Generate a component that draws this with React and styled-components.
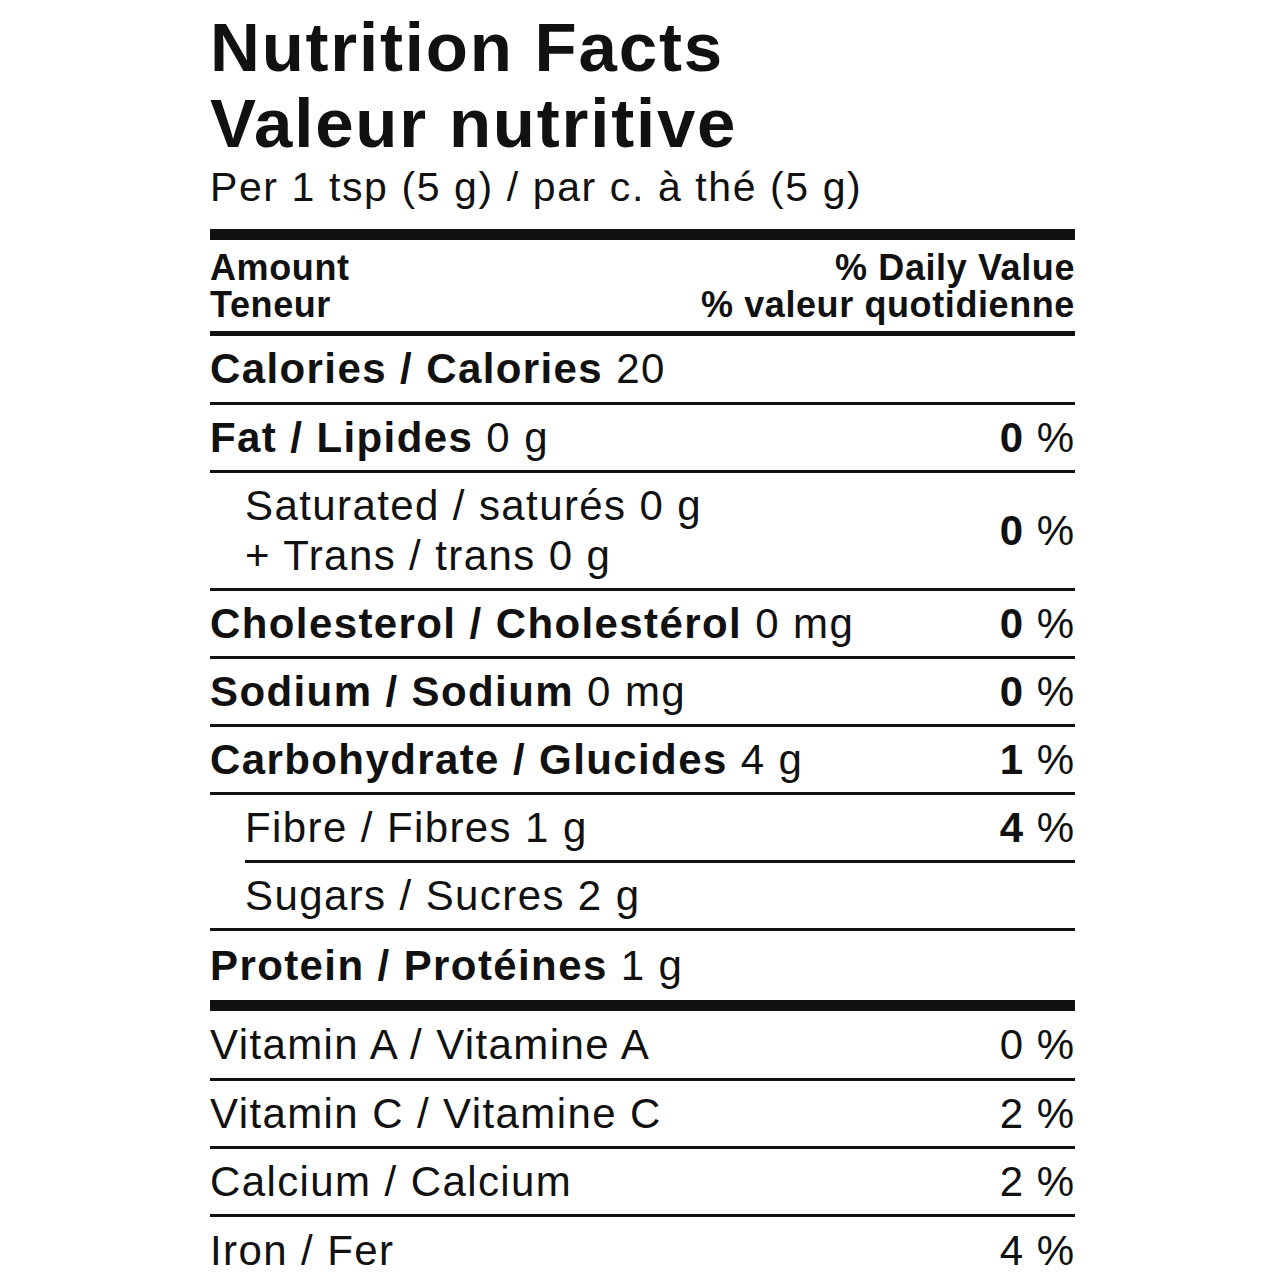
import React from 'react';
import styled, { createGlobalStyle } from 'styled-components';

const GlobalStyle = createGlobalStyle`
  html, body {
    margin: 0;
    padding: 0;
    background: #ffffff;
  }
  body {
    font-family: "Liberation Sans", Arial, sans-serif;
    color: #111111;
  }
`;

const Label = styled.div`
  width: 865px;
  margin-left: 210px;
  padding-top: 10px;
`;

const Title = styled.h1`
  margin: 0;
  font-size: 69px;
  line-height: 76px;
  font-weight: 700;
  letter-spacing: 1.8px;
`;

const Serving = styled.div`
  font-size: 41px;
  line-height: 50px;
  letter-spacing: 1.6px;
  padding-bottom: 17px;
`;

const Bar = styled.div`
  height: ${(p) => p.$weight}px;
  background: #111111;
`;

const Header = styled.div`
  display: flex;
  justify-content: space-between;
  height: 91px;
  box-sizing: border-box;
  padding-top: 9px;
  font-size: 36px;
  line-height: 37px;
  font-weight: 700;
  letter-spacing: 0.6px;
`;

const HeaderCol = styled.div`
  text-align: ${(p) => (p.$right ? 'right' : 'left')};
`;

const Row = styled.div`
  display: flex;
  justify-content: space-between;
  align-items: center;
  height: ${(p) => p.$height || 68}px;
  box-sizing: border-box;
  margin-left: ${(p) => (p.$indent ? 35 : 0)}px;
  border-bottom: ${(p) => (p.$last ? 'none' : '3px solid #111111')};
  font-size: 42px;
  line-height: 50px;
  letter-spacing: 1.4px;
`;

const RowText = styled.div`
  padding-left: ${(p) => (p.$indent ? 35 : 0)}px;
`;

const Strong = styled.span`
  font-weight: 700;
`;

const Percent = styled.div`
  white-space: nowrap;
  letter-spacing: 1px;
`;

const Pct = ({ value, bold }) => (
  <Percent>
    {bold ? <Strong>{value}</Strong> : value} %
  </Percent>
);

export default function App() {
  return (
    <>
      <GlobalStyle />
      <Label>
        <Title>
          Nutrition Facts
          <br />
          Valeur nutritive
        </Title>
        <Serving>Per 1 tsp (5 g) / par c. à thé (5 g)</Serving>
        <Bar $weight={11} />
        <Header>
          <HeaderCol>
            Amount
            <br />
            Teneur
          </HeaderCol>
          <HeaderCol $right>
            % Daily Value
            <br />
            % valeur quotidienne
          </HeaderCol>
        </Header>
        <Bar $weight={5} />
        <Row $height={69}>
          <RowText>
            <Strong>Calories / Calories</Strong> 20
          </RowText>
        </Row>
        <Row>
          <RowText>
            <Strong>Fat / Lipides</Strong> 0 g
          </RowText>
          <Pct value="0" bold />
        </Row>
        <Row $height={118}>
          <RowText $indent>
            Saturated / saturés 0 g
            <br />+ Trans / trans 0 g
          </RowText>
          <Pct value="0" bold />
        </Row>
        <Row>
          <RowText>
            <Strong>Cholesterol / Cholestérol</Strong> 0 mg
          </RowText>
          <Pct value="0" bold />
        </Row>
        <Row>
          <RowText>
            <Strong>Sodium / Sodium</Strong> 0 mg
          </RowText>
          <Pct value="0" bold />
        </Row>
        <Row>
          <RowText>
            <Strong>Carbohydrate / Glucides</Strong> 4 g
          </RowText>
          <Pct value="1" bold />
        </Row>
        <Row $indent>
          <RowText>Fibre / Fibres 1 g</RowText>
          <Pct value="4" bold />
        </Row>
        <Row>
          <RowText $indent>Sugars / Sucres 2 g</RowText>
        </Row>
        <Row $height={69} $last>
          <RowText>
            <Strong>Protein / Protéines</Strong> 1 g
          </RowText>
        </Row>
        <Bar $weight={11} />
        <Row $height={70}>
          <RowText>Vitamin A / Vitamine A</RowText>
          <Pct value="0" />
        </Row>
        <Row>
          <RowText>Vitamin C / Vitamine C</RowText>
          <Pct value="2" />
        </Row>
        <Row>
          <RowText>Calcium / Calcium</RowText>
          <Pct value="2" />
        </Row>
        <Row $last>
          <RowText>Iron / Fer</RowText>
          <Pct value="4" />
        </Row>
      </Label>
    </>
  );
}
